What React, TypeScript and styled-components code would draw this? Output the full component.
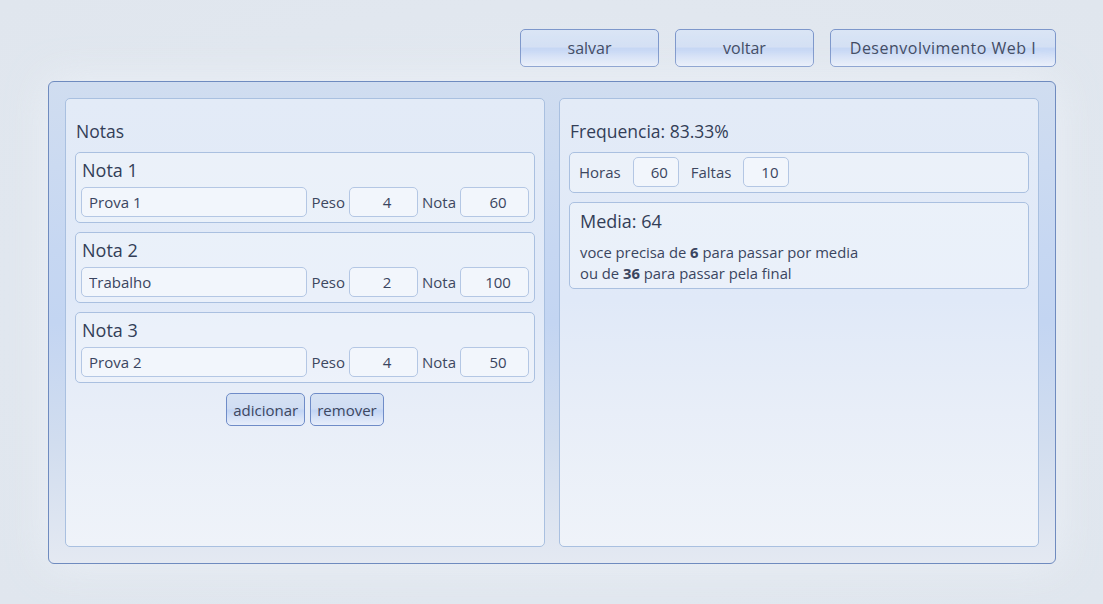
import React from "react";
import styled, { createGlobalStyle } from "styled-components";

const Global = createGlobalStyle`
  html, body { margin: 0; padding: 0; }
  body {
    background: radial-gradient(ellipse 70% 70% at 50% 50%, #e6ebf3 0%, #e1e7ef 70%, #e0e6ee 100%);
    min-height: 604px;
    font-family: "Open Sans", "DejaVu Sans", sans-serif;
    color: #3a4560;
  }
`;

const Page = styled.div`
  padding: 29px 47px 0 48px;
  display: flex;
  flex-direction: column;
  gap: 14px;
`;

const Toolbar = styled.div`
  display: flex;
  justify-content: flex-end;
  gap: 16px;
`;

const TopButton = styled.button<{ $wide?: boolean }>`
  height: 38px;
  width: ${(p) => (p.$wide ? "226px" : "139px")};
  border: 1px solid #7d97cb;
  border-radius: 5px;
  background: linear-gradient(180deg, #dae5f5 0%, #d4e0f4 46%, #c4d6f5 52%, #dbe5f8 80%, #eaf0fb 100%);
  font-family: inherit;
  font-size: 16px;
  letter-spacing: ${(p) => (p.$wide ? "0.5px" : "0")};
  color: #3d4760;
  padding: 0;
  cursor: pointer;
`;

const Panel = styled.div`
  height: 483px;
  box-sizing: border-box;
  border: 1px solid #6f8bbf;
  border-radius: 6px;
  padding: 16px;
  display: grid;
  grid-template-columns: 1fr 1fr;
  gap: 14px;
  background: linear-gradient(180deg, #d0ddf0 0%, #c6d7f2 35%, #c3d5f2 50%, #d1ddef 75%, #e4e9f2 100%);
  box-shadow: 0 0 40px rgba(240, 244, 250, 0.7);
`;

const Column = styled.section`
  box-sizing: border-box;
  border: 1px solid #a9c0e0;
  border-radius: 5px;
  padding: 9px 9px;
  background: linear-gradient(180deg, #e3ebf7 0%, #e0e9f8 45%, #e8eef8 70%, #eff3f9 100%);
  display: flex;
  flex-direction: column;
`;

const ColumnTitle = styled.h2`
  margin: 13px 0 11px 1px;
  font-size: 17.5px;
  line-height: 20px;
  font-weight: 400;
  color: #333e57;
`;

const Card = styled.div`
  border: 1px solid #aac0e0;
  border-radius: 5px;
  background: rgba(243, 246, 252, 0.55);
  & + & {
    margin-top: 9px;
  }
`;

const NotaCard = styled(Card)`
  padding: 6px 5px 5px 5px;
`;

const CardTitle = styled.h3`
  margin: 0 0 6px 1px;
  font-size: 18px;
  line-height: 22px;
  font-weight: 400;
  color: #333e57;
`;

const Row = styled.div`
  display: flex;
  align-items: center;
  gap: 4px;
`;

const Label = styled.span`
  font-size: 15px;
  color: #3d4760;
`;

const Field = styled.input<{ $w?: number }>`
  box-sizing: border-box;
  height: 30px;
  width: ${(p) => (p.$w ? `${p.$w}px` : "auto")};
  flex: ${(p) => (p.$w ? "none" : "1")};
  min-width: 0;
  border: 1px solid #b4c7e4;
  border-radius: 5px;
  background: #f2f6fc;
  font-family: inherit;
  font-size: 15px;
  color: #3a4560;
  padding: 0 0 0 7px;
  text-align: ${(p) => (p.$w ? "center" : "left")};
  outline: none;
`;

const Actions = styled.div`
  display: flex;
  justify-content: center;
  gap: 5px;
  margin-top: 10px;
`;

const SmallButton = styled.button`
  height: 33px;
  padding: 0 6px;
  border: 1px solid #6f8cc8;
  border-radius: 5px;
  background: linear-gradient(180deg, #d6e2f3 0%, #d0ddf3 46%, #c2d5f5 54%, #d9e4f8 80%, #e6edfa 100%);
  font-family: inherit;
  font-size: 15px;
  color: #3d4760;
  cursor: pointer;
`;

const HoursCard = styled(Card)`
  padding: 4px 9px 5px 9px;
  display: flex;
  align-items: center;
  gap: 12px;
`;

const MediaCard = styled(Card)`
  padding: 7px 10px 4px 10px;
`;

const MediaTitle = styled(CardTitle)`
  margin: 0 0 10px 0;
`;

const Line = styled.p`
  margin: 0;
  font-size: 14.8px;
  line-height: 21px;
  color: #3a4560;
  b { font-weight: 700; }
`;

const notas = [
  { nome: "Nota 1", desc: "Prova 1", peso: "4", nota: "60" },
  { nome: "Nota 2", desc: "Trabalho", peso: "2", nota: "100" },
  { nome: "Nota 3", desc: "Prova 2", peso: "4", nota: "50" },
];

export default function App() {
  return (
    <>
      <Global />
      <Page>
        <Toolbar>
          <TopButton>salvar</TopButton>
          <TopButton>voltar</TopButton>
          <TopButton $wide>Desenvolvimento Web I</TopButton>
        </Toolbar>
        <Panel>
          <Column>
            <ColumnTitle>Notas</ColumnTitle>
            {notas.map((n) => (
              <NotaCard key={n.nome}>
                <CardTitle>{n.nome}</CardTitle>
                <Row>
                  <Field defaultValue={n.desc} />
                  <Label>Peso</Label>
                  <Field $w={69} defaultValue={n.peso} />
                  <Label>Nota</Label>
                  <Field $w={69} defaultValue={n.nota} />
                </Row>
              </NotaCard>
            ))}
            <Actions>
              <SmallButton>adicionar</SmallButton>
              <SmallButton>remover</SmallButton>
            </Actions>
          </Column>
          <Column>
            <ColumnTitle>Frequencia: 83.33%</ColumnTitle>
            <HoursCard>
              <Label>Horas</Label>
              <Field $w={46} defaultValue="60" />
              <Label>Faltas</Label>
              <Field $w={46} defaultValue="10" />
            </HoursCard>
            <MediaCard>
              <MediaTitle>Media: 64</MediaTitle>
              <Line>
                voce precisa de <b>6</b> para passar por media
              </Line>
              <Line>
                ou de <b>36</b> para passar pela final
              </Line>
            </MediaCard>
          </Column>
        </Panel>
      </Page>
    </>
  );
}
